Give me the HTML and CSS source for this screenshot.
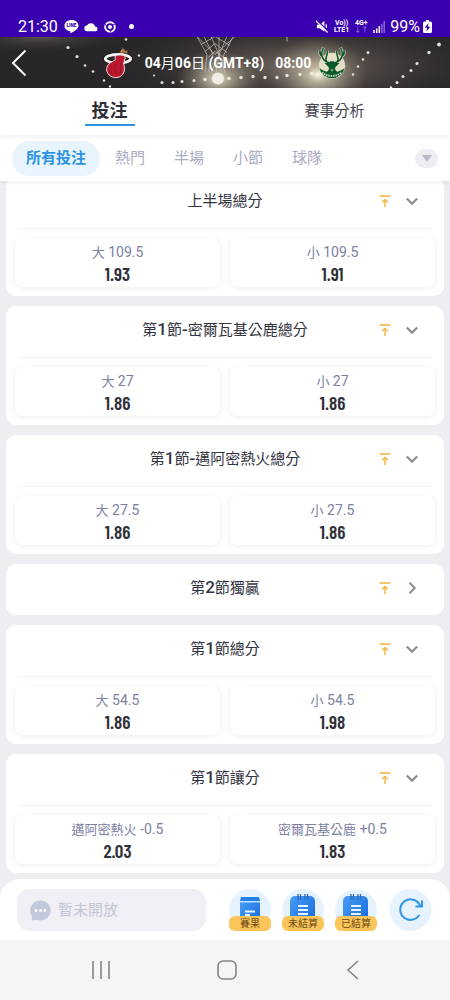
FILE: index.html
```html
<!DOCTYPE html>
<html lang="zh-Hant">
<head>
<meta charset="utf-8">
<meta name="viewport" content="width=device-width, initial-scale=1">
<title>投注</title>
<link rel="stylesheet" href="styles.css">
</head>
<body>
<svg class="sprite" aria-hidden="true">
  <symbol id="pin" viewBox="0 0 12 12"><path d="M.5 1h11M6 12V4.500M3.200 7.200 6 4.400l2.800 2.800" fill="none" stroke="#f3b33d" stroke-width="1.400"/></symbol>
  <symbol id="down" viewBox="0 0 12 12"><path d="M.8 3.500 6 8.700l5.200-5.200" fill="none" stroke="#8c8c8f" stroke-width="2.200"/></symbol>
  <symbol id="right" viewBox="0 0 12 12"><path d="M3.500.8 8.700 6l-5.200 5.200" fill="none" stroke="#8c8c8f" stroke-width="2"/></symbol>
  <symbol id="calendar" viewBox="0 0 42 42">
    <circle cx="21" cy="21" r="21" fill="#e6f2fd"/>
    <rect x="8" y="7" width="25" height="30" rx="5" fill="url(#blue)"/>
    <path d="M16 5v6M18.500 5v6M23 5v6M25.500 5v6" stroke="#2a6db8" stroke-width="1.300"/>
    <path d="M16 17h10M16 21h10M16 25h10" stroke="#e9f4ff" stroke-width="2"/>
  </symbol>
  <linearGradient id="blue" x1="0" y1="0" x2="1" y2="1"><stop stop-color="#489df5"/><stop offset="1" stop-color="#1367dc"/></linearGradient>
</svg>
<div class="app">
  <div class="status">
    <span class="clock">21:30</span>
    <svg class="line-icon" viewBox="0 0 16 15"><path d="M8 .5C3.600.5.500 3.200.500 6.600c0 3 2.500 5.400 6.300 6v2C10 13.300 15.500 10 15.500 6.600 15.500 3.200 12.400.5 8 .5z" fill="#fff"/><text x="8" y="8.500" text-anchor="middle" class="line-word">LINE</text></svg>
    <svg class="cloud" viewBox="0 0 16 10"><path d="M3.500 9.500a3 3 0 0 1-.3-6 4.600 4.600 0 0 1 8.600 1 2.600 2.600 0 0 1 1 5z" fill="#fff"/></svg>
    <svg class="chrome" viewBox="0 0 12 12"><circle cx="6" cy="6" r="4.800" fill="none" stroke="#fff" stroke-width="2"/><circle cx="6" cy="6" r="2" fill="#fff"/><path d="M6 3.400h5M3.700 7.300 1.200 3M8.300 7.300 6 11.500" stroke="#3a00b0" stroke-width=".8"/></svg>
    <span class="dot"></span>
    <span class="spacer"></span>
    <svg class="mute" viewBox="0 0 14 14"><path d="M1 5h3l5-4v11.500L4 9H1z" fill="#fff"/><path d="M11 4.500v4" stroke="#fff" stroke-width="1.400"/><path d="M1 0 14 13" stroke="#3a00b0" stroke-width="1.500"/><path d="M0 1l12.500 12.500" stroke="#fff" stroke-width="1.300"/></svg>
    <span class="net">Vo))<br>LTE1</span>
    <span class="net">4G+<br><span class="dim">↓↑</span></span>
    <svg class="signal" viewBox="0 0 12 12"><path d="M1 12V9M3.700 12V7.500M6.300 12V5" stroke="#fff" stroke-width="1.500"/><path d="M8.800 12V3M11.200 12V0" stroke="#8967d6" stroke-width="1.500"/></svg>
    <span class="percent">99%</span>
    <svg class="battery" viewBox="0 0 9 13"><rect y="1.500" width="9" height="11.500" rx="1.500" fill="#fff"/><path d="M3 0h3v2H3z" fill="#fff"/><path d="M5.500 3 1.800 7.700h2.300L3.500 11.500l3.800-4.800H4.900z" fill="#3a00b0"/></svg>
  </div>

  <header class="match">
    <svg class="arena" viewBox="0 0 450 52" preserveAspectRatio="xMidYMid slice" aria-hidden="true">
      <defs>
        <radialGradient id="glow"><stop stop-color="#fffbe6"/><stop offset=".2" stop-color="#d8cfb6" stop-opacity=".75"/><stop offset="1" stop-color="#8b8070" stop-opacity="0"/></radialGradient>
        <radialGradient id="haze"><stop stop-color="#776c63"/><stop offset="1" stop-color="#3c3633" stop-opacity="0"/></radialGradient>
      </defs>
      <rect width="450" height="52" fill="#282629"/>
      <ellipse cx="300" cy="30" rx="190" ry="50" fill="url(#haze)"/>
      <ellipse cx="40" cy="0" rx="90" ry="16" fill="url(#haze)" opacity=".6"/>
      <ellipse cx="218" cy="42" rx="42" ry="30" fill="url(#glow)"/>
      <ellipse cx="318" cy="38" rx="50" ry="38" fill="url(#glow)"/>
      <path d="M197 0 207 18 205 36M204 0l9 18-5 18M211 0l8 18-3 18M219 0v18l6 18M227 0l-8 18-8 18M233 0l-9 18-4 18M197 0l18 18M235 0l-20 18M201 8l14-8 15 9M205 15l10-8 12 9M207 22l8-7 11 7" fill="none" stroke="#cfc8bd" stroke-width=".9" opacity=".75"/>
      <path d="M287 0v5" stroke="#b5afa8"/>
      <g fill="#f4f1ea" opacity=".9"><circle cx="126" cy="3" r="1.300"/><circle cx="68" cy="11" r="1.600"/><circle cx="77" cy="20" r="1.600"/><circle cx="85" cy="29" r="1.300"/><circle cx="93" cy="35" r="1.300"/><circle cx="104" cy="44" r="1.200"/><circle cx="110" cy="50" r="1.200"/><circle cx="139" cy="19" r="1.200"/><circle cx="154" cy="39" r="1.100"/><circle cx="162" cy="46" r="1.500"/><circle cx="173" cy="46" r="1.500"/><circle cx="182" cy="45" r="1.500"/><circle cx="194" cy="44" r="1.500"/><circle cx="205" cy="43" r="1.800"/><circle cx="218" cy="42" r="6"/><circle cx="229" cy="42" r="1.700"/><circle cx="241" cy="41" r="1.700"/><circle cx="253" cy="40" r="1.700"/><circle cx="265" cy="41" r="1.700"/><circle cx="277" cy="41" r="1.700"/><circle cx="287" cy="39" r="1.700"/><circle cx="300" cy="38" r="1.700"/><circle cx="312" cy="37" r="1.800"/><circle cx="353" cy="38" r="1.200"/><circle cx="358" cy="30" r="1.300"/><circle cx="363" cy="23" r="1.300"/><circle cx="368" cy="16" r="1.500"/><circle cx="391" cy="51" r="1.300"/><circle cx="397" cy="46" r="1.500"/><circle cx="403" cy="40" r="1.500"/><circle cx="411" cy="34" r="1.500"/><circle cx="417" cy="27" r="1.600"/><circle cx="429" cy="16" r="1.700"/><circle cx="439" cy="8" r="1.900"/></g>
    </svg>
    <button class="back" aria-label="返回"><svg viewBox="0 0 16 28"><path d="M14.500 1.500 2 14l12.500 12.500" fill="none" stroke="#fff" stroke-width="2"/></svg></button>
    <div class="teams">
      <svg class="logo" viewBox="0 0 32 34" role="img" aria-label="邁阿密熱火">
        <path d="M15 9c0-3 3-2 4-5 1-2 3-2 4-1 2 3 3 3 2 6z" fill="#e08a2b"/><path d="M21 0l2 5 3-2v5h-6z" fill="#9a7c4c"/>
        <ellipse cx="16" cy="12.500" rx="13.500" ry="4.600" fill="none" stroke="#171517" stroke-width="4.400"/><ellipse cx="16" cy="12.500" rx="13.500" ry="4.600" fill="none" stroke="#f5f5f5" stroke-width="3"/>
        <path d="M13 9c4-1 8-1 11 1l-2 8c3 7-1 14-7 14.500-7 1-12-5-11-10 1-6 7-7 9-9z" fill="#bd1a2f" stroke="#f4e9e9" stroke-width="1"/>
        <path d="M9 20c-2 4-1 7 1 9M14 18c-3 5-1 8 1 11M19 17c-2 5 1 8-1 11" fill="none" stroke="#7a1122" stroke-width=".8"/>
      </svg>
      <p class="date">04<span class="han">月</span>06<span class="han">日</span> (GMT+8)</p>
      <p class="time">08:00</p>
      <svg class="logo" viewBox="0 0 32 36" role="img" aria-label="密爾瓦基公鹿">
        <circle cx="16" cy="21" r="14" fill="#e5dfc5"/>
        <path d="M2.500 23a13.700 13.700 0 0 0 27 0c-4 6-23 6-27 0z" fill="#09602f"/><path d="M5.500 28c5 5 16 5 21 0" fill="none" stroke="#e5dfc5" stroke-width="2" stroke-dasharray="1.500 1"/>
        <path id="antlers" d="M14 18C7 17 2 10 7 1.500M18 18c7-1 12-8 7-16.500M10 16C8 12 12 9 11 5M22 16c2-4-2-7-1-11M6 11C3 10 3 8 3 5M26 11c3-1 3-3 3-6" fill="none" stroke="#e5dfc5" stroke-width="3"/>
        <path d="M14 18C7 17 2 10 7 1.500M18 18c7-1 12-8 7-16.500M10 16C8 12 12 9 11 5M22 16c2-4-2-7-1-11M6 11C3 10 3 8 3 5M26 11c3-1 3-3 3-6" fill="none" stroke="#08572d" stroke-width="1.700"/>
        <path d="M8 18l5 0 1-2h4l1 2 5 0-4 4-1 2 3 5H10l3-5-1-2z" fill="#08572d"/><path d="M14.500 25h3l-1.500 2z" fill="#e5dfc5"/>
      </svg>
    </div>
  </header>

  <nav class="tabs">
    <button class="tab active"><span>投注</span></button>
    <button class="tab"><span>賽事分析</span></button>
  </nav>

  <nav class="filters">
    <button class="filter active">所有投注</button>
    <button class="filter">熱門</button>
    <button class="filter">半場</button>
    <button class="filter">小節</button>
    <button class="filter">球隊</button>
    <button class="more" aria-label="更多"><svg viewBox="0 0 10 7"><path d="M0 0h10L5 7z" fill="#b9b9c9"/></svg></button>
  </nav>

  <main class="list">
    <section class="card">
      <header class="card-head"><h2>上半場總分</h2><div class="tools"><button aria-label="置頂"><svg><use href="#pin"/></svg></button><button aria-label="收合"><svg><use href="#down"/></svg></button></div></header>
      <div class="options"><button class="option"><span class="name"><span class="cjk">大</span> 109.5</span><span class="odds">1.93</span></button><button class="option"><span class="name"><span class="cjk">小</span> 109.5</span><span class="odds">1.91</span></button></div>
    </section>
    <section class="card">
      <header class="card-head"><h2>第<b>1</b>節<b>-</b>密爾瓦基公鹿總分</h2><div class="tools"><button aria-label="置頂"><svg><use href="#pin"/></svg></button><button aria-label="收合"><svg><use href="#down"/></svg></button></div></header>
      <div class="options"><button class="option"><span class="name"><span class="cjk">大</span> 27</span><span class="odds">1.86</span></button><button class="option"><span class="name"><span class="cjk">小</span> 27</span><span class="odds">1.86</span></button></div>
    </section>
    <section class="card">
      <header class="card-head"><h2>第<b>1</b>節<b>-</b>邁阿密熱火總分</h2><div class="tools"><button aria-label="置頂"><svg><use href="#pin"/></svg></button><button aria-label="收合"><svg><use href="#down"/></svg></button></div></header>
      <div class="options"><button class="option"><span class="name"><span class="cjk">大</span> 27.5</span><span class="odds">1.86</span></button><button class="option"><span class="name"><span class="cjk">小</span> 27.5</span><span class="odds">1.86</span></button></div>
    </section>
    <section class="card">
      <header class="card-head"><h2>第<b>2</b>節獨贏</h2><div class="tools"><button aria-label="置頂"><svg><use href="#pin"/></svg></button><button aria-label="展開"><svg><use href="#right"/></svg></button></div></header>
    </section>
    <section class="card">
      <header class="card-head"><h2>第<b>1</b>節總分</h2><div class="tools"><button aria-label="置頂"><svg><use href="#pin"/></svg></button><button aria-label="收合"><svg><use href="#down"/></svg></button></div></header>
      <div class="options"><button class="option"><span class="name"><span class="cjk">大</span> 54.5</span><span class="odds">1.86</span></button><button class="option"><span class="name"><span class="cjk">小</span> 54.5</span><span class="odds">1.98</span></button></div>
    </section>
    <section class="card">
      <header class="card-head"><h2>第<b>1</b>節讓分</h2><div class="tools"><button aria-label="置頂"><svg><use href="#pin"/></svg></button><button aria-label="收合"><svg><use href="#down"/></svg></button></div></header>
      <div class="options"><button class="option"><span class="name"><span class="cjk">邁阿密熱火</span> -0.5</span><span class="odds">2.03</span></button><button class="option"><span class="name"><span class="cjk">密爾瓦基公鹿</span> +0.5</span><span class="odds">1.83</span></button></div>
    </section>
  </main>

  <footer class="dock">
    <label class="chat">
      <svg viewBox="0 0 21 21"><path d="M10.500.5a10 10 0 1 1-3.800 19.200L1.500 20.500l.7-4A10 10 0 0 1 10.500.5z" fill="#c3c9dc"/><g fill="#fff"><circle cx="6" cy="10.500" r="1.400"/><circle cx="10.500" cy="10.500" r="1.400"/><circle cx="15" cy="10.500" r="1.400"/></g></svg>
      <input type="text" placeholder="暫未開放" aria-label="聊天" disabled>
    </label>
    <button class="round"><svg viewBox="0 0 42 42"><circle cx="21" cy="21" r="21" fill="#e6f2fd"/><path d="M12 8h18l1 4H11z" fill="#2182e6"/><path d="M11 13h20v24H11z" fill="url(#blue)"/><path d="M11 13h20" stroke="#a9d3fb"/><path d="M16 22.500h10" stroke="#e9f4ff" stroke-width="2"/><path d="M16 26h5" stroke="#e9f4ff" stroke-width="2"/></svg><span class="badge">賽果</span></button>
    <button class="round"><svg><use href="#calendar"/></svg><span class="badge">未結算</span></button>
    <button class="round"><svg><use href="#calendar"/></svg><span class="badge">已結算</span></button>
    <button class="round refresh" aria-label="重新整理"><svg viewBox="0 0 42 42"><circle cx="21" cy="21" r="21" fill="#e6f2fd"/><path d="M29.500 26.500A10.300 10.300 0 1 1 30.500 16.500" fill="none" stroke="#3096e5" stroke-width="2" stroke-linecap="round"/><path d="M32.500 11.500v6H26" fill="none" stroke="#3096e5" stroke-width="2"/></svg></button>
  </footer>

  <nav class="system">
    <button aria-label="最近"><svg viewBox="0 0 20 20"><path d="M2 1v18M10 1v18M18 1v18" stroke="#858585" stroke-width="1.600"/></svg></button>
    <button aria-label="主畫面"><svg viewBox="0 0 20 20"><rect x="1" y="1" width="18" height="18" rx="5" fill="none" stroke="#858585" stroke-width="1.600"/></svg></button>
    <button aria-label="返回"><svg viewBox="0 0 20 20"><path d="M15 1 5 10l10 9" fill="none" stroke="#858585" stroke-width="1.600"/></svg></button>
  </nav>
</div>
</body>
</html>
```

FILE: styles.css
```css
* { box-sizing: border-box; }

body {
  margin: 0;
  background: #ededf2;
  color: #33343f;
  font-family: Roboto, "Noto Sans CJK TC", sans-serif;
}

button {
  margin: 0;
  padding: 0;
  border: 0;
  background: none;
  color: inherit;
  font: inherit;
}

h2, p { margin: 0; }
svg { display: block; }

.sprite {
  position: absolute;
  width: 0;
  height: 0;
}

.app {
  display: flex;
  flex-direction: column;
  min-height: 100vh;
}

/* status bar */
.status {
  display: flex;
  align-items: center;
  gap: 5px;
  height: 37px;
  padding: 16px 18px 0;
  background: #3a00b0;
  color: #fff;
  font-size: 16px;
  line-height: 20px;
}

.clock { margin-right: 1px; }
.line-icon { width: 15px; height: 15px; }
.line-word { font-size: 5px; font-weight: 900; fill: #3a00b0; }
.cloud { width: 15px; height: 10px; }
.chrome { width: 12px; height: 12px; }
.dot { width: 5px; height: 5px; margin-left: 8px; border-radius: 50%; background: #fff; }
.spacer { flex: 1; }
.mute { width: 13px; height: 13px; }
.net { font-size: 7px; font-weight: 700; line-height: 7px; text-align: center; }
.dim { color: #8967d6; }
.signal { width: 12px; height: 12px; }
.battery { width: 9px; height: 13px; }
.percent { margin-right: -2px; }

/* match header */
.match {
  position: relative;
  display: grid;
  grid-template-columns: 1fr auto 1fr;
  align-items: center;
  height: 51px;
  overflow: hidden;
  color: #fff;
}

.arena {
  position: absolute;
  inset: 0;
  width: 100%;
  height: 100%;
}

.back {
  position: relative;
  justify-self: start;
  padding-left: 11px;
}

.back svg { width: 16px; height: 28px; }

.teams {
  position: relative;
  display: flex;
  align-items: center;
  font-size: 14px;
  font-weight: 700;
  line-height: 20px;
}

.logo { width: 30px; height: 34px; }
.date { margin-left: 12px; }
.time { margin: 0 6px 0 11px; }
.han { font-weight: 400; }

/* page tabs */
.tabs {
  position: relative;
  z-index: 3;
  display: grid;
  grid-template-columns: 1fr 1fr;
  height: 47px;
  background: #fff;
  box-shadow: 0 2px 6px #0000000f;
}

.tab {
  display: flex;
  justify-content: center;
  padding: 9px 6px 0 0;
  color: #44454f;
  font-size: 15px;
  line-height: 28px;
}

.tab.active {
  color: #2d2e38;
  font-size: 18px;
  font-weight: 700;
}

.tab.active span {
  height: 29px;
  padding: 0 7px;
  border-bottom: 2px solid #2b93e2;
}

/* filters */
.filters {
  position: relative;
  z-index: 2;
  display: flex;
  align-items: center;
  gap: 1px;
  height: 46px;
  padding: 0 12px;
  background: #fff;
  box-shadow: 0 2px 4px #0000000f;
}

.filter {
  height: 35px;
  padding: 0 14px;
  border-radius: 18px;
  color: #a9abc2;
  font-size: 15px;
  line-height: 33px;
}

.filter.active {
  background: #e8f4fe;
  color: #2b93e2;
  font-weight: 700;
}

.more {
  display: grid;
  place-items: center;
  width: 23px;
  height: 19px;
  margin-left: auto;
  border-radius: 10px;
  background: #ededf4;
}

.more svg { width: 10px; height: 7px; }

/* bet list, scrolled slightly under the filters */
.list {
  display: flex;
  flex: 1;
  flex-direction: column;
  gap: 10px;
  margin-top: -4px;
  padding: 0 6px 6px;
}

.card {
  border-radius: 10px;
  background: #fff;
}

.card-head {
  display: grid;
  grid-template-columns: 1fr auto 1fr;
  align-items: center;
  height: 51px;
  padding-bottom: 4px;
}

.card-head h2 {
  grid-column: 2;
  font-size: 15px;
  font-weight: 400;
  line-height: 24px;
}

.card-head b {
  font-size: 17px;
  font-weight: 500;
}

.tools {
  display: flex;
  justify-self: end;
  gap: 15px;
  padding-right: 26px;
}

.tools svg { width: 12px; height: 12px; }

.options {
  display: grid;
  grid-template-columns: 1fr 1fr;
  gap: 10px;
  padding: 10px 9px 9px;
  position: relative;
}

.options::before {
  content: "";
  position: absolute;
  inset: 0 12px auto;
  border-top: 1px solid #f1f1f3;
}

.option {
  display: flex;
  flex-direction: column;
  align-items: center;
  height: 49px;
  padding-top: 4px;
  border-radius: 8px;
  background: #fff;
  box-shadow: 0 1px 6px #00000012;
}

.name {
  color: #7b80a3;
  font-size: 14px;
  line-height: 20px;
}

.cjk { font-size: 13px; }

.odds {
  color: #2f3038;
  font-family: "Barlow Condensed", "Roboto Condensed", "Liberation Sans Narrow", Roboto, sans-serif;
  font-size: 19px;
  font-weight: 600;
  line-height: 22px;
}

/* bottom dock */
.dock {
  display: flex;
  align-items: center;
  gap: 11px;
  padding: 10px 18px 9px 17px;
  border-radius: 20px 20px 0 0;
  background: #fff;
}

.chat {
  display: flex;
  flex: 1;
  align-items: center;
  gap: 7px;
  min-width: 0;
  height: 42px;
  margin-right: 12px;
  padding: 0 13px;
  border-radius: 13px;
  background: #efeff5;
}

.chat svg { flex: none; width: 21px; height: 21px; }

.chat input {
  width: 100%;
  min-width: 0;
  padding: 0;
  border: 0;
  background: none;
  font: inherit;
  font-size: 15px;
}

.chat input::placeholder { color: #c3c5d6; opacity: 1; }

.round {
  position: relative;
  flex: none;
  width: 42px;
  height: 42px;
}

.round svg { width: 100%; height: 100%; }

.refresh { width: 43px; margin-left: 1px; }

.badge {
  position: absolute;
  inset: auto 0 0;
  height: 15px;
  border-radius: 6px;
  background: #fcc55c;
  color: #6b4a12;
  font-size: 10px;
  line-height: 15px;
}

/* system navigation */
.system {
  display: flex;
  align-items: center;
  justify-content: space-between;
  height: 60px;
  padding: 0 87px 0 91px;
  background: #f5f5f5;
}

.system svg { width: 20px; height: 20px; }
```
